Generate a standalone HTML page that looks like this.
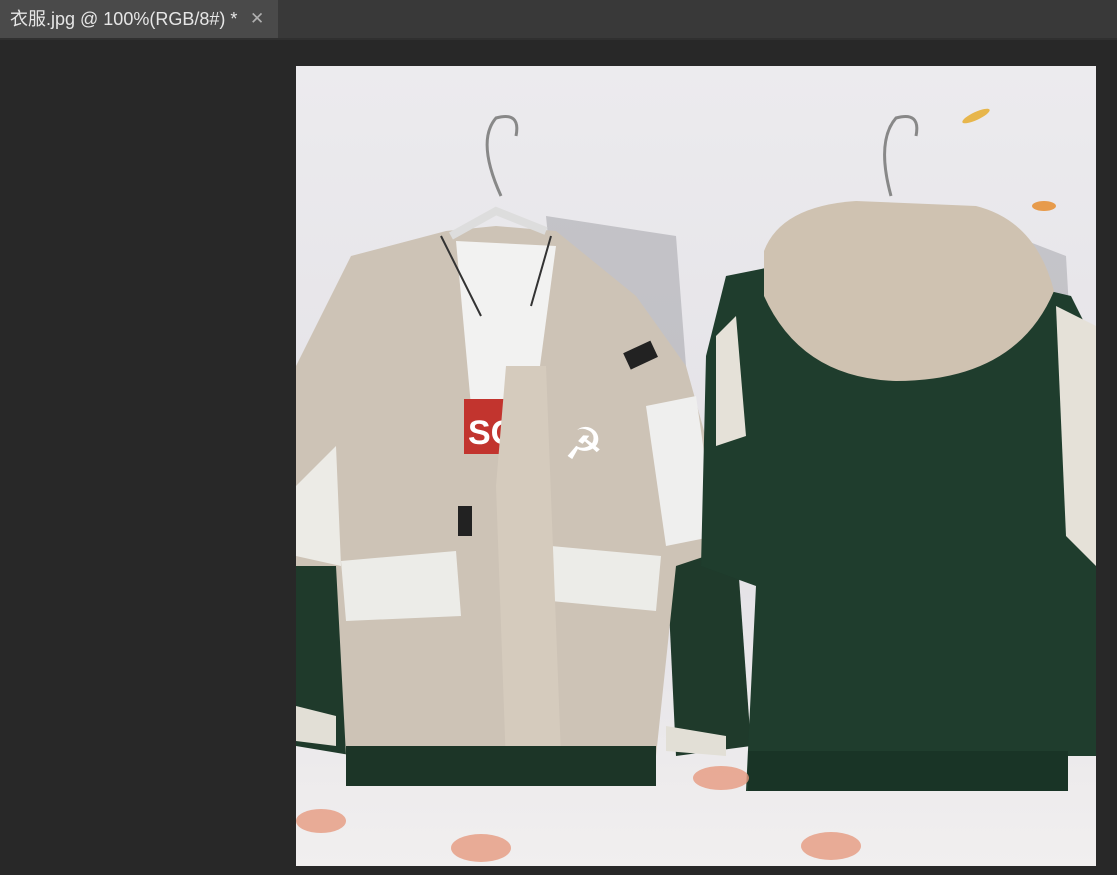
<!DOCTYPE html>
<html><head><meta charset="utf-8"><style>
body{margin:0;width:1117px;height:875px;background:#282828;overflow:hidden;font-family:"Liberation Sans","Noto Sans CJK SC",sans-serif}
.bar{position:absolute;left:0;top:0;width:1117px;height:38px;background:#393939;border-bottom:2px solid #303030}
.tab{position:absolute;left:0;top:0;width:278px;height:38px;background:#4a4a4a;color:#e6e6e6;font-size:18px;line-height:38px;padding-left:10px;box-sizing:border-box;white-space:nowrap}
.x{position:absolute;left:250px;top:0;color:#b0b0b0;font-size:17px}
svg{position:absolute;left:296px;top:66px}
</style></head><body>
<div class="bar"><div class="tab">衣服.jpg @ 100%(RGB/8#) *<span class="x">✕</span></div></div>
<svg width="800" height="800" viewBox="0 0 800 800">
<defs><linearGradient id="bg" x1="0" y1="0" x2="0" y2="1"><stop offset="0" stop-color="#ecebee"/><stop offset=".6" stop-color="#e3e1e6"/><stop offset="1" stop-color="#f1efef"/></linearGradient></defs>
<rect width="800" height="800" fill="url(#bg)"/>
<path d="M250 150 L380 170 L410 560 L290 560Z" fill="#9e9ea4" opacity=".5"/>
<path d="M640 140 L770 190 L790 540 L700 540Z" fill="#9a9aa0" opacity=".45"/>
<!-- left jacket -->
<path d="M0 490 L40 470 L60 690 L0 680Z" fill="#1f3a2b"/>
<path d="M370 480 L440 470 L455 680 L380 690Z" fill="#1f3a2b"/>
<path d="M55 190 L150 165 L200 160 L260 165 L340 230 L390 300 L440 480 L380 500 L360 690 L50 690 L40 500 L0 500 L0 300 Z" fill="#cdc3b6"/>
<path d="M0 420 L40 380 L45 500 L0 490Z" fill="#ecebe6"/>
<path d="M350 340 L400 330 L420 470 L370 480Z" fill="#efefee"/>
<path d="M45 495 L160 485 L165 550 L50 555Z" fill="#ecece8"/>
<path d="M255 480 L365 490 L360 545 L255 535Z" fill="#ecece8"/>
<path d="M160 175 L260 180 L240 330 L175 340Z" fill="#f2f2f1"/>
<rect x="168" y="333" width="70" height="55" fill="#c2342e"/>
<text x="172" y="378" font-size="34" font-weight="bold" fill="#fff" font-family="Liberation Sans">SOA</text>
<path d="M210 300 L250 300 L265 690 L210 700 L200 420Z" fill="#d5cbbd"/>
<rect x="50" y="680" width="310" height="40" fill="#1c3527"/>
<path d="M0 640 L40 650 L40 680 L0 675Z" fill="#e2dfd6"/>
<path d="M370 660 L430 670 L430 690 L370 685Z" fill="#e2dfd6"/>
<text x="268" y="393" font-size="44" fill="#fff">☭</text>
<rect x="330" y="280" width="30" height="18" fill="#222" transform="rotate(-25 345 290)"/>
<rect x="162" y="440" width="14" height="30" fill="#222"/>
<path d="M145 170 L185 250 M255 170 L235 240" stroke="#333" stroke-width="2"/>
<path d="M155 170 L200 145 L250 165" stroke="#ddd" stroke-width="8" fill="none"/>
<path d="M205 130 Q180 75 200 52 Q225 45 220 70" stroke="#888" stroke-width="3" fill="none"/>
<!-- right jacket -->
<path d="M430 210 L480 200 L690 210 L775 230 L800 280 L800 690 L750 690 L770 720 L450 725 L460 520 L405 500 L410 290Z" fill="#1f3d2d"/>
<path d="M760 240 L800 260 L800 500 L770 470Z" fill="#e5e1d8"/>
<path d="M420 270 L440 250 L450 370 L420 380Z" fill="#e5e1d8"/>
<path d="M468 185 Q485 140 560 135 L680 140 Q740 155 758 225 Q720 315 600 315 Q505 312 468 230Z" fill="#cfc2b1"/>
<rect x="452" y="685" width="320" height="40" fill="#193426"/>
<path d="M595 130 Q580 75 600 52 Q625 45 620 70" stroke="#888" stroke-width="3" fill="none"/>
<!-- flowers -->
<ellipse cx="25" cy="755" rx="25" ry="12" fill="#e69a80" opacity=".8"/>
<ellipse cx="185" cy="782" rx="30" ry="14" fill="#e69a80" opacity=".8"/>
<ellipse cx="425" cy="712" rx="28" ry="12" fill="#e69a80" opacity=".8"/>
<ellipse cx="535" cy="780" rx="30" ry="14" fill="#e69a80" opacity=".8"/>
<ellipse cx="680" cy="50" rx="15" ry="4" fill="#e7b64c" transform="rotate(-25 680 50)"/>
<ellipse cx="748" cy="140" rx="12" ry="5" fill="#e79b4c"/>
</svg>
</body></html>
